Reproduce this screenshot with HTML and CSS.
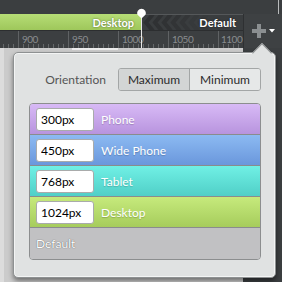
FILE: index.html
```html
<!DOCTYPE html>
<html lang="en">
<head>
  <meta charset="UTF-8" />
  <title>Breakpoints</title>
  <link rel="stylesheet" href="styles.css">
</head>
<body>
  <div class="topbar"></div>

  <div class="header">
    <div class="timeline">
      <div class="track">
        <div class="track-fill"><span class="track-label">Desktop</span></div>
        <div class="track-rest">
          <svg class="chevrons" width="70" height="15" viewBox="0 0 70 15">
            <g fill="none" stroke-width="4">
              <polyline points="10,-1 3,7.5 10,16" stroke="#2e3032"/>
              <polyline points="19,-1 12,7.5 19,16" stroke="#2f3133"/>
              <polyline points="28,-1 21,7.5 28,16" stroke="#303234"/>
              <polyline points="37,-1 30,7.5 37,16" stroke="#323436"/>
              <polyline points="46,-1 39,7.5 46,16" stroke="#343638"/>
              <polyline points="55,-1 48,7.5 55,16" stroke="#36393b"/>
              <polyline points="64,-1 57,7.5 64,16" stroke="#383b3d"/>
            </g>
          </svg>
          <span class="track-label">Default</span>
        </div>
      </div>
      <div class="ruler">
        <span class="tick">900</span>
        <span class="tick">950</span>
        <span class="tick">1000</span>
        <span class="tick">1050</span>
        <span class="tick last">1100</span>
      </div>
      <span class="marker">
        <svg width="11" height="11" viewBox="0 0 11 11">
          <path d="M5.5 10.5 L1.6 6.8 A4.3 4.3 0 1 1 9.4 6.8 Z" fill="#fff"/>
        </svg>
      </span>
    </div>
    <button class="add-btn">
      <svg width="14" height="14" viewBox="0 0 14 14">
        <rect x="5" y="0" width="4" height="14" fill="#8b8f91"/>
        <rect x="0" y="5" width="14" height="4" fill="#8b8f91"/>
      </svg>
      <svg width="6" height="4" viewBox="0 0 6 4">
        <path d="M0 0 H6 L3 3.5 Z" fill="#fff"/>
      </svg>
    </button>
  </div>

  <div class="stage">
    <span class="range"></span>

    <div class="popup">
      <div class="orient">
        <span class="orient-label">Orientation</span>
        <div class="seg">
          <button class="seg-btn active">Maximum</button>
          <button class="seg-btn">Minimum</button>
        </div>
      </div>

      <div class="list">
        <div class="row phone">
          <input class="size-input" value="300px">
          <span class="row-label">Phone</span>
        </div>
        <div class="row wide">
          <input class="size-input" value="450px">
          <span class="row-label">Wide Phone</span>
        </div>
        <div class="row tablet">
          <input class="size-input" value="768px">
          <span class="row-label">Tablet</span>
        </div>
        <div class="row desktop">
          <input class="size-input" value="1024px">
          <span class="row-label">Desktop</span>
        </div>
        <div class="row default">
          <span class="row-label">Default</span>
        </div>
      </div>
    </div>
  </div>
</body>
</html>
```

FILE: styles.css
```css
body {
  margin: 0;
  width: 282px;
  height: 282px;
  overflow: hidden;
  background-color: #cbcbcb;
  font-family: Lato, 'Liberation Sans', sans-serif;
  font-size: 12px;
}
.topbar {
  height: 14px;
  background: linear-gradient(to right, #3b3e40 278px, #b9bbbc 278px, #b9bbbc 279px, #3b3e40 279px);
}
.header {
  display: flex;
  height: 34px;
  background-color: #3b3e40;
}
.timeline {
  position: relative;
  width: 243px;
}
.track {
  display: flex;
  height: 16px;
}
.track-fill {
  width: 141px;
  box-sizing: border-box;
  padding-right: 7px;
  display: flex;
  justify-content: flex-end;
  align-items: center;
  background: linear-gradient(#b6dd76, #9ec75b);
}
.track-label {
  color: #fff;
  font-weight: 700;
  font-size: 11px;
  text-shadow: 0 0 2px rgba(0, 0, 0, 0.55);
}
.track-rest {
  flex: 1;
  position: relative;
  box-sizing: border-box;
  padding-right: 7px;
  display: flex;
  justify-content: flex-end;
  align-items: center;
  background-color: #3a3d3f;
  border-top: 1px solid #55585a;
}
.chevrons {
  position: absolute;
  left: 2px;
  top: 0;
}
.track-rest .track-label {
  position: relative;
}
.ruler {
  height: 18px;
  box-sizing: border-box;
  padding-left: 18px;
  display: flex;
  overflow: hidden;
  border-top: 1px solid #2c2e30;
  background-color: #3c3f41;
  background-image: linear-gradient(to right, #65686a 1px, transparent 1px);
  background-size: 5px 4px;
  background-position: 3px 100%;
  background-repeat: repeat-x;
}
.tick {
  flex: 0 0 50px;
  box-sizing: border-box;
  padding: 3px 0 0 3px;
  border-left: 1px solid #5f6264;
  color: #8a8d8f;
  font-size: 10px;
  line-height: 10px;
  letter-spacing: -0.5px;
  white-space: nowrap;
}
.tick.last {
  flex: 0 0 25px;
  padding-left: 2px;
}
.marker {
  position: absolute;
  left: 136px;
  top: -6px;
  width: 11px;
  height: 40px;
  background: linear-gradient(to right, transparent 5px, #e8e8e8 5px, #e8e8e8 6px, transparent 6px) no-repeat 0 10px;
}
.marker svg {
  display: block;
}
.add-btn {
  flex: 1;
  display: flex;
  justify-content: center;
  align-items: center;
  gap: 3px;
  padding: 0;
  border: 0;
  border-left: 1px solid #2e3032;
  background-color: #3e4143;
}

.stage {
  position: relative;
  height: 234px;
  background: linear-gradient(to right, #dcdcdc 4px, #cbcbcb 4px, #cbcbcb 243px, #3b3e40 243px);
}
.range {
  display: block;
  margin-left: 72px;
  width: 46px;
  height: 2px;
  background-color: #ececec;
}
.popup {
  position: absolute;
  left: 13px;
  top: 4px;
  width: 263px;
  height: 226px;
  box-sizing: border-box;
  padding: 15px 14px 0 15px;
  background-color: #e0e2e2;
  border: 1px solid #8e9192;
  border-radius: 5px;
  box-shadow: inset 0 0 0 1px #f3f4f4, 0 3px 5px rgba(0, 0, 0, 0.45);
}
.popup::before {
  content: "";
  position: absolute;
  left: 241px;
  top: -7px;
  width: 13px;
  height: 13px;
  background-color: #e0e2e2;
  border-left: 1px solid #8e9192;
  border-top: 1px solid #8e9192;
  transform: rotate(45deg);
}
.orient {
  position: relative;
  display: flex;
  justify-content: flex-end;
  align-items: center;
  gap: 12px;
}
.orient-label {
  color: #555;
  font-size: 12px;
}
.seg {
  display: flex;
  height: 23px;
  box-sizing: border-box;
  border: 1px solid #a3a6a6;
  border-radius: 3px;
  overflow: hidden;
}
.seg-btn {
  width: 70px;
  padding: 0;
  border: 0;
  font: inherit;
  color: #2b2b2b;
  background-color: #e6e8e8;
}
.seg-btn + .seg-btn {
  width: 71px;
  border-left: 1px solid #a3a6a6;
}
.seg-btn.active {
  background-color: #d3d5d5;
}
.list {
  margin-top: 12px;
  border: 1px solid #8c8e8f;
  border-radius: 4px;
  overflow: hidden;
}
.row {
  height: 30px;
  display: flex;
  align-items: center;
  gap: 7px;
  padding-left: 6px;
  border-top: 1px solid #8a8c8d;
}
.row:first-child {
  border-top: 0;
}
.size-input {
  width: 58px;
  height: 23px;
  box-sizing: border-box;
  padding: 0 0 0 4px;
  border: 1px solid #a9abab;
  border-radius: 3px;
  background-color: #fff;
  color: #000;
  font: 12px Lato, 'Liberation Sans', sans-serif;
}
.row-label {
  color: #fff;
  font-size: 12px;
  text-shadow: 0 1px 1px rgba(0, 0, 0, 0.2);
}
.phone { background: linear-gradient(#d8baf6, #b894de); }
.wide { background: linear-gradient(#8cbaf2, #6a97dc); }
.tablet { background: linear-gradient(#70f0e5, #50cfc7); }
.desktop { background: linear-gradient(#c6ea7c, #a6cc5c); }
.default {
  height: 31px;
  background-color: #c1c1c3;
}
.default .row-label {
  color: #fff;
  text-shadow: 0 0 1px rgba(0, 0, 0, 0.7);
}
```
